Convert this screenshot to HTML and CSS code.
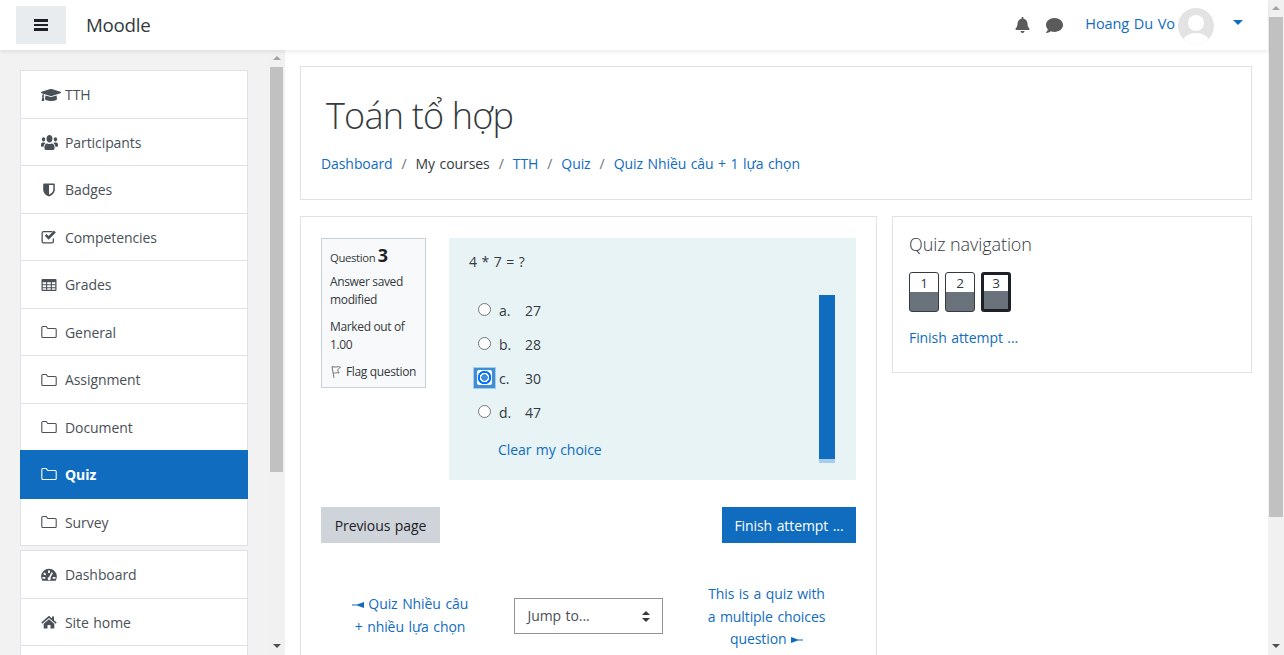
FILE: index.html
```html
<!DOCTYPE html>
<html>
<head>
  <title>Quiz</title>
  <link rel="stylesheet" href="styles.css">
</head>
<body>

<div id="page">
  <header class="navbar">
    <button class="menu-btn"><i></i><i></i><i></i></button>
    <span class="brand">Moodle</span>
    <div class="nav-right">
      <svg class="nav-icon bell" viewBox="0 0 448 512"><path d="M224 512c35.32 0 63.97-28.65 63.97-64H160.03c0 35.35 28.65 64 63.97 64zm215.39-149.71c-19.32-20.76-55.47-51.99-55.47-154.29 0-77.7-54.48-139.9-127.94-155.16V32c0-17.67-14.32-32-31.98-32s-31.98 14.33-31.98 32v20.84C118.56 68.1 64.08 130.3 64.08 208c0 102.3-36.15 133.53-55.47 154.29-6 6.45-8.66 14.16-8.61 21.71.11 16.4 12.98 32 32.1 32h383.8c19.12 0 32-15.6 32.1-32 .05-7.55-2.61-15.27-8.61-21.71z"/></svg>
      <svg class="nav-icon comment" viewBox="0 0 512 512"><path d="M256 32C114.6 32 0 125.1 0 240c0 49.6 21.4 95 57 130.7C44.5 421.1 2.7 466 2.2 466.5c-2.2 2.3-2.8 5.7-1.5 8.7S4.8 480 8 480c66.3 0 116-31.8 140.6-51.4 32.7 12.3 69 19.4 107.4 19.4 141.4 0 256-93.1 256-208S397.4 32 256 32z"/></svg>
      <a class="user-name">Hoang Du Vo</a>
      <svg class="avatar" viewBox="0 0 36 36"><defs><clipPath id="av"><circle cx="18" cy="18" r="18"/></clipPath></defs><circle cx="18" cy="18" r="18" fill="#e3e3e3"/><g clip-path="url(#av)" fill="#fff"><circle cx="18" cy="15" r="8"/><ellipse cx="18" cy="36" rx="14" ry="11"/></g></svg>
      <span class="caret"></span>
    </div>
  </header>

  <div class="content">
    <aside class="sidebar">
      <div class="side-lists">
        <ul class="side-list">
          <li><svg class="ic hat" viewBox="0 0 640 512"><path d="M622.34 153.2L343.4 67.5c-15.2-4.67-31.6-4.67-46.79 0L17.66 153.2c-23.54 7.23-23.54 38.36 0 45.59l48.63 14.94c-10.67 13.19-17.23 29.28-17.88 46.9C38.78 266.15 32 276.11 32 288c0 10.78 5.68 19.85 13.86 25.65L20.33 428.53C18.11 438.52 25.71 448 35.94 448h56.11c10.24 0 17.84-9.48 15.62-19.47L82.14 313.65C90.32 307.85 96 298.78 96 288c0-11.57-6.47-21.25-15.66-26.87.76-15.02 8.44-28.3 20.69-36.72L296.6 284.5c9.06 2.78 26.44 6.25 46.79 0l278.95-85.7c23.55-7.24 23.55-38.36 0-45.6zM352.79 315.09c-28.53 8.76-52.84 3.92-65.59 0l-145.02-44.55L128 384c0 35.35 85.96 64 192 64s192-28.65 192-64l-14.18-113.47-145.03 44.56z"/></svg>TTH</li>
          <li><svg class="ic people" viewBox="0 30 640 452" preserveAspectRatio="none"><path d="M96 224c35.3 0 64-28.7 64-64s-28.7-64-64-64-64 28.7-64 64 28.7 64 64 64zm448 0c35.3 0 64-28.7 64-64s-28.7-64-64-64-64 28.7-64 64 28.7 64 64 64zm32 32h-64c-17.6 0-33.5 7.1-45.1 18.6 40.3 22.1 68.9 62 75.1 109.4h66c17.7 0 32-14.3 32-32v-32c0-35.3-28.7-64-64-64zm-256 0c61.9 0 112-50.1 112-112S381.9 32 320 32 208 82.1 208 144s50.1 112 112 112zm76.8 32h-8.3c-20.8 10-43.9 16-68.5 16s-47.6-6-68.5-16h-8.3C179.6 288 128 339.6 128 403.2V432c0 26.5 21.5 48 48 48h288c26.5 0 48-21.5 48-48v-28.8c0-63.6-51.6-115.2-115.2-115.2zm-223.7-13.4C161.5 263.1 145.6 256 128 256H64c-35.3 0-64 28.7-64 64v32c0 17.7 14.3 32 32 32h65.9c6.3-47.4 34.9-87.3 75.2-109.4z"/></svg>Participants</li>
          <li><svg class="ic" viewBox="0 0 16 16"><path fill-rule="evenodd" d="M3 1.5h10a.8.8 0 0 1 .8.8v5.2c0 3.6-2.8 6-5.8 7-3-1-5.8-3.4-5.8-7V2.300a.8.8 0 0 1 .8-.8zM8 3v9.700c2.100-.9 4.300-2.700 4.300-5.200V3z"/></svg>Badges</li>
          <li><svg class="ic" viewBox="0 0 16 16"><path d="M2.500 2h9v1.300h-9a.7.7 0 0 0-.7.7v8.500c0 .4.3.7.7.7h8.500c.4 0 .7-.3.7-.7V9.500H13v3a2 2 0 0 1-2 2H2.500a2 2 0 0 1-2-2V4a2 2 0 0 1 2-2z"/><path d="M3.800 6.800l1.800-1.800 2 2 5.400-5.400 1.800 1.800-7.200 7.300z"/></svg>Competencies</li>
          <li><svg class="ic" viewBox="0 0 16 16"><path fill-rule="evenodd" d="M1.500 2h13a1 1 0 0 1 1 1v10a1 1 0 0 1-1 1h-13a1 1 0 0 1-1-1V3a1 1 0 0 1 1-1zM1.700 5.300v2h3.400v-2zm4.500 0v2h3.600v-2zm4.700 0v2h3.400v-2zM1.700 8.300v2h3.400v-2zm4.500 0v2h3.600v-2zm4.700 0v2h3.400v-2zM1.700 11.300v1.500h3.400v-1.500zm4.500 0v1.500h3.600v-1.500zm4.700 0v1.500h3.400v-1.500z"/></svg>Grades</li>
          <li><svg class="ic folder" viewBox="0 0 16 16"><path d="M.8 3.500a1 1 0 0 1 1-1h3.400l1.600 2h7.400a1 1 0 0 1 1 1v7a1 1 0 0 1-1 1H1.800a1 1 0 0 1-1-1z"/></svg>General</li>
          <li><svg class="ic folder" viewBox="0 0 16 16"><path d="M.8 3.500a1 1 0 0 1 1-1h3.400l1.600 2h7.400a1 1 0 0 1 1 1v7a1 1 0 0 1-1 1H1.800a1 1 0 0 1-1-1z"/></svg>Assignment</li>
          <li><svg class="ic folder" viewBox="0 0 16 16"><path d="M.8 3.500a1 1 0 0 1 1-1h3.400l1.600 2h7.400a1 1 0 0 1 1 1v7a1 1 0 0 1-1 1H1.800a1 1 0 0 1-1-1z"/></svg>Document</li>
          <li class="active"><svg class="ic folder" viewBox="0 0 16 16"><path d="M.8 3.500a1 1 0 0 1 1-1h3.400l1.600 2h7.400a1 1 0 0 1 1 1v7a1 1 0 0 1-1 1H1.800a1 1 0 0 1-1-1z"/></svg>Quiz</li>
          <li><svg class="ic folder" viewBox="0 0 16 16"><path d="M.8 3.500a1 1 0 0 1 1-1h3.400l1.600 2h7.400a1 1 0 0 1 1 1v7a1 1 0 0 1-1 1H1.800a1 1 0 0 1-1-1z"/></svg>Survey</li>
        </ul>
        <ul class="side-list">
          <li><svg class="ic" viewBox="0 0 16 16"><path fill-rule="evenodd" d="M8 1.800a7.800 7.800 0 0 1 7.800 7.800c0 1.400-.4 2.700-1 3.800a1 1 0 0 1-.8.400H2a1 1 0 0 1-.8-.4 7.600 7.600 0 0 1-1-3.800A7.800 7.800 0 0 1 8 1.800zM7 3.500v2.500h2V3.500zM3.300 5.500L2.200 7l2 1.500 1-1.400zM10.500 5.200L8 10a1.600 1.600 0 1 0 1.500.6l2.500-4.700zM1.500 10v1.800h2.800V10zm10.200 0v1.800h2.800V10z"/></svg>Dashboard</li>
          <li><svg class="ic" viewBox="0 0 16 16"><path d="M8 1.800L.3 8.500l1 1.200L8 4l6.700 5.700 1-1.200-2.700-2.300V2.500h-2v2z"/><path d="M2.700 9.700L8 5.300l5.300 4.400V14.500H9.500v-3.500h-3v3.500H2.700z"/></svg>Site home</li>
          <li></li>
        </ul>
      </div>
      <div class="scroll side-scroll">
        <span class="arrow up"></span>
        <div class="track"><div class="thumb"></div></div>
        <span class="arrow down"></span>
      </div>
    </aside>

    <main class="main">
      <section class="card page-head">
        <h1>Toán tổ hợp</h1>
        <nav class="crumbs">
          <a>Dashboard</a><span class="sep">/</span><span>My courses</span><span class="sep">/</span><a>TTH</a><span class="sep">/</span><a>Quiz</a><span class="sep">/</span><a>Quiz Nhiều câu + 1 lựa chọn</a>
        </nav>
      </section>

      <div class="columns">
        <section class="card quiz">
          <div class="question">
            <div class="q-info">
              <div class="q-no">Question <b>3</b></div>
              <p>Answer saved<br>modified</p>
              <p>Marked out of<br>1.00</p>
              <div class="q-flag"><svg viewBox="0 0 12 14"><path d="M2 1.500L4 13M2 1.500c3 1.500 5 -.5 8.500.5L7.500 5l1.500 3C6.500 7 5 8.500 3.200 8" fill="none" stroke="#777" stroke-width="1"/></svg>Flag question</div>
            </div>
            <div class="q-body">
              <div class="q-text">4 * 7 = ?</div>
              <div class="answer-area">
                <div class="answers">
                  <label class="opt"><span class="radio-box"><span class="radio"></span></span><span class="letter">a.</span>27</label>
                  <label class="opt"><span class="radio-box"><span class="radio"></span></span><span class="letter">b.</span>28</label>
                  <label class="opt"><span class="radio-box on"><span class="radio"></span></span><span class="letter">c.</span>30</label>
                  <label class="opt"><span class="radio-box"><span class="radio"></span></span><span class="letter">d.</span>47</label>
                  <a class="clear">Clear my choice</a>
                </div>
                <div class="bar"></div>
              </div>
            </div>
          </div>

          <div class="actions">
            <button class="btn grey">Previous page</button>
            <button class="btn blue">Finish attempt ...</button>
          </div>

          <div class="jump-row">
            <a class="prev"><svg class="pin" viewBox="0 0 12 8"><path d="M0 3.500h5L12 1v6L5 4.500H0z"/></svg> Quiz Nhiều câu<br>+ nhiều lựa chọn</a>
            <div class="jump">Jump to...<span class="updown"></span></div>
            <a class="next">This is a quiz with<br>a multiple choices<br>question <svg class="pin" viewBox="0 0 12 8"><path d="M12 3.500H7L0 1v6l7-2.500h5z"/></svg></a>
          </div>
        </section>

        <section class="card block">
          <h5>Quiz navigation</h5>
          <div class="qn-btns">
            <span class="qn">1</span>
            <span class="qn">2</span>
            <span class="qn now">3</span>
          </div>
          <a class="finish">Finish attempt ...</a>
        </section>
      </div>
    </main>
  </div>
</div>

<div class="scroll page-scroll">
  <span class="arrow up"></span>
  <div class="track"><div class="thumb"></div></div>
  <span class="arrow down"></span>
</div>

</body>
</html>
```

FILE: styles.css
```css
* {
  box-sizing: border-box;
}

body {
  margin: 0;
  height: 655px;
  overflow: hidden;
  display: flex;
  background-color: #fff;
  color: #343a40;
  font-family: "Open Sans", "Noto Sans", sans-serif;
  font-size: 14px;
  letter-spacing: -0.08px;
  word-spacing: 1px;
}

a {
  color: #0f6cbf;
}

#page {
  flex: 1;
  min-width: 0;
  display: flex;
  flex-direction: column;
}

/* top bar */
.navbar {
  height: 50px;
  flex-shrink: 0;
  display: flex;
  align-items: center;
  padding-left: 16px;
  background-color: #fff;
  box-shadow: 0 2px 4px rgba(0,0,0,0.08);
  position: relative;
}

.menu-btn {
  width: 50px;
  height: 38px;
  border: 0;
  padding: 0;
  background-color: #e9ecef;
  display: flex;
  flex-direction: column;
  align-items: center;
  justify-content: center;
  gap: 2px;
}

.menu-btn i {
  width: 14px;
  height: 2.500px;
  background-color: #1d2125;
}

.brand {
  margin: -1px 0 0 20px;
  font-size: 18.750px;
  letter-spacing: -0.3px;
  color: #343a40;
}

.nav-right {
  margin-left: auto;
  display: flex;
  align-items: center;
  height: 100%;
}

.nav-icon {
  fill: #5b5b5b;
}

.bell {
  width: 15px;
  height: 16px;
}

.comment {
  width: 17px;
  height: 17px;
  margin-left: 16px;
}

.user-name {
  margin-left: 22px;
  font-size: 14.500px;
  margin-top: -3px;
  white-space: nowrap;
}

.avatar {
  width: 36px;
  height: 36px;
  margin-left: 3px;
  margin-top: 1px;
}

.caret {
  width: 0;
  height: 0;
  margin: -6px 25px 0 19px;
  border-left: 5px solid transparent;
  border-right: 5px solid transparent;
  border-top: 5px solid #0f6cbf;
}

.content {
  flex: 1;
  min-height: 0;
  display: flex;
}

/* left drawer */
.sidebar {
  width: 285px;
  flex-shrink: 0;
  display: flex;
  background-color: #f2f2f2;
}

.side-lists {
  flex: 1;
  padding: 20px 21px 0 20px;
}

.side-list {
  list-style: none;
  margin: 0 0 4.500px;
  padding: 0;
  background-color: #fff;
  border: 1px solid #dee2e6;
}

.side-list li {
  height: 47.500px;
  display: flex;
  align-items: center;
  padding: 1px 0 0 20px;
  color: #495057;
  border-bottom: 1px solid #dee2e6;
}

.side-list li:last-child {
  border-bottom: 0;
  height: 46px;
}

.side-list li.active {
  height: 48.500px;
  background-color: #0f6cbf;
  color: #fff;
  font-weight: 700;
  margin: -1px -1px 0;
  padding: 0 0 0 21px;
  border-bottom: 0;
}

.ic {
  width: 16px;
  height: 16px;
  margin-right: 8px;
  fill: #495057;
  flex-shrink: 0;
}

.ic.hat {
  width: 20px;
  margin-right: 4px;
}

.ic.people {
  width: 17px;
  height: 15px;
  margin-right: 7px;
}

.ic.folder {
  fill: none;
  stroke: #495057;
  stroke-width: 1.100;
}

.active .ic.folder {
  stroke: #fff;
}

/* scrollbars */
.scroll {
  display: flex;
  flex-direction: column;
  align-items: center;
  background-color: #f1f1f1;
}

.side-scroll {
  width: 16px;
}

.page-scroll {
  width: 16px;
  height: 655px;
  flex-shrink: 0;
}

.arrow {
  height: 17px;
  flex-shrink: 0;
  width: 100%;
  position: relative;
}

.arrow::after {
  content: "";
  position: absolute;
  left: 4px;
  top: 6px;
  border-left: 4px solid transparent;
  border-right: 4px solid transparent;
}

.arrow.up::after {
  border-bottom: 4px solid #a3a3a3;
}

.arrow.down::after {
  border-top: 4px solid #505050;
}

.track {
  flex: 1;
  width: 100%;
  padding: 0 1px;
}

.thumb {
  background-color: #c1c1c1;
}

.side-scroll .thumb {
  height: 405px;
  margin-right: 1px;
}

.page-scroll .thumb {
  height: 500px;
}

/* main column */
.main {
  flex: 1;
  min-width: 0;
  padding: 16px 16px 0 15px;
  overflow: hidden;
}

.card {
  background-color: #fff;
  border: 1px solid #dee2e6;
}

.page-head {
  height: 134px;
  padding: 24px 20px 0;
}

h1 {
  margin: 0 0 0 5px;
  font-size: 36px;
  font-weight: 300;
  line-height: 50px;
  color: #343a40;
  letter-spacing: -0.8px;
  word-spacing: 0;
}

.crumbs {
  margin-top: 12px;
  line-height: 22px;
}

.sep {
  margin: 0 9px;
  color: #6a737b;
}

.columns {
  display: flex;
  align-items: flex-start;
  gap: 15px;
  margin-top: 16px;
}

.quiz {
  width: 577px;
  height: 460px;
  flex-shrink: 0;
  padding: 21px 20px 0;
}

.question {
  display: flex;
  gap: 23px;
}

.q-info {
  width: 105px;
  height: 150px;
  flex-shrink: 0;
  padding: 5px 8px;
  background-color: #f8f9fa;
  border: 1px solid #cad0d7;
  font-size: 12px;
  line-height: 18px;
  letter-spacing: -0.35px;
  word-spacing: 0;
}

.q-no {
  margin-bottom: 4px;
  line-height: 22px;
  font-size: 11.300px;
}

.q-no b {
  font-size: 18px;
  color: #1d2125;
}

.q-info p {
  margin: 0 0 9px;
}

.q-flag {
  display: flex;
  align-items: center;
  white-space: nowrap;
}

.q-flag svg {
  width: 12px;
  height: 14px;
  margin-right: 4px;
  flex-shrink: 0;
}

.q-body {
  flex: 1;
  height: 242px;
  background-color: #e7f3f5;
  padding: 13px 21px 0 20px;
}

.q-text {
  line-height: 22px;
  margin-bottom: 20px;
}

.answer-area {
  display: flex;
  justify-content: space-between;
}

.opt {
  display: flex;
  align-items: center;
  height: 34px;
  padding-left: 5px;
}

.radio-box {
  width: 21px;
  height: 20px;
  margin: -1px 4px 0 0;
  display: flex;
  align-items: center;
  justify-content: center;
  flex-shrink: 0;
}

.radio {
  width: 13px;
  height: 13px;
  border-radius: 50%;
  background-color: #fff;
  border: 1px solid #767676;
}

.radio-box.on {
  background-color: #3f8ed6;
  box-shadow: 0 0 0 1px #a8cdec;
}

.radio-box.on .radio {
  width: 15px;
  height: 15px;
  border: 0;
  border-radius: 2px;
  background: radial-gradient(circle, #3f8fe0 0 3px, #fff 3.500px 4.500px, #0075ff 5px 6.500px, #fff 7px);
}

.letter {
  width: 26px;
}

.clear {
  display: block;
  margin: 10px 0 0 29px;
  line-height: 22px;
}

.bar {
  width: 16px;
  height: 168px;
  margin-top: 2px;
  background: linear-gradient(#0f6cbf 164px, #a8cdec 164px);
}

.actions {
  display: flex;
  justify-content: space-between;
  margin-top: 27px;
}

.btn {
  height: 36px;
  padding: 0;
  border: 0;
  font-family: inherit;
  font-size: 14px;
  letter-spacing: inherit;
  word-spacing: inherit;
}

.btn.grey {
  width: 119px;
  background-color: #ced4da;
  color: #1d2125;
}

.btn.blue {
  width: 134px;
  background-color: #0f6cbf;
  color: #fff;
}

.jump-row {
  display: grid;
  grid-template-columns: 178px 178px 179px;
  align-items: center;
  margin-top: 38px;
  text-align: center;
  line-height: 22.500px;
}

.next {
  padding-top: 2px;
}

.pin {
  width: 12px;
  height: 8px;
  fill: #0f6cbf;
}

.jump {
  width: 149px;
  height: 36px;
  margin: 0 auto;
  padding: 1px 12px 0 13px;
  display: flex;
  align-items: center;
  justify-content: space-between;
  border: 1px solid #8f959e;
  color: #495057;
  background-color: #fff;
}

.updown {
  width: 8px;
  height: 11px;
  position: relative;
}

.updown::before,
.updown::after {
  content: "";
  position: absolute;
  left: 0;
  border-left: 4px solid transparent;
  border-right: 4px solid transparent;
}

.updown::before {
  top: 0;
  border-bottom: 4.500px solid #343a40;
}

.updown::after {
  bottom: 0;
  border-top: 4.500px solid #343a40;
}

/* quiz navigation block */
.block {
  width: 360px;
  height: 157px;
  padding: 15px 16px;
}

h5 {
  margin: 0;
  font-size: 18px;
  font-weight: 300;
  line-height: 24px;
  color: #343a40;
  word-spacing: 0;
}

.qn-btns {
  display: flex;
  gap: 6px;
  margin-top: 16px;
}

.qn {
  width: 30px;
  height: 40px;
  border: 1px solid #343a40;
  border-radius: 3px;
  text-align: center;
  line-height: 20px;
  font-size: 13.500px;
  background: linear-gradient(#fff 19px, #6a737b 19px);
}

.qn.now {
  border: 3px solid #1d2125;
  line-height: 16px;
  background: linear-gradient(#fff 16px, #6a737b 16px);
}

.finish {
  display: block;
  margin-top: 15px;
  line-height: 22px;
}
```
